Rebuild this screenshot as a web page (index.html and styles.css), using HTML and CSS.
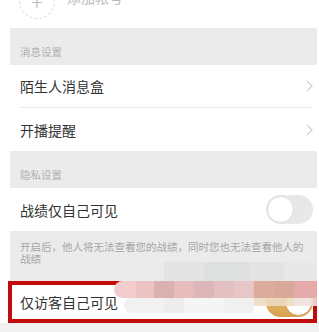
FILE: index.html
```html
<!DOCTYPE html>
<html lang="zh-CN">
<head>
    <meta charset="UTF-8">
    <meta name="viewport" content="width=device-width, initial-scale=1.0">
    <title>设置</title>
    <link rel="stylesheet" href="styles.css">
</head>
<body>
    <div class="page">
        <div class="account">
            <span class="add-circle">+</span>
            <span class="account-text">添加帐号</span>
        </div>

        <div class="section-title">消息设置</div>
        <div class="row row-line">
            <span class="row-label">陌生人消息盒</span>
            <svg class="chevron" width="7" height="12" viewBox="0 0 7 12">
                <path d="M1 1 L6 6 L1 11" fill="none" stroke="#d4d4d4" stroke-width="1.3"/>
            </svg>
        </div>
        <div class="row">
            <span class="row-label">开播提醒</span>
            <svg class="chevron" width="7" height="12" viewBox="0 0 7 12">
                <path d="M1 1 L6 6 L1 11" fill="none" stroke="#d4d4d4" stroke-width="1.3"/>
            </svg>
        </div>

        <div class="section-title">隐私设置</div>
        <div class="row">
            <span class="row-label">战绩仅自己可见</span>
            <span class="switch"><span class="knob"></span></span>
        </div>
        <div class="note">开启后，他人将无法查看您的战绩，同时您也无法查看他人的战绩</div>
        <div class="row row-marked">
            <span class="row-label">仅访客自己可见</span>
            <span class="switch switch-on"><span class="knob"></span></span>
            <div class="frame"></div>
            <div class="mosaic">
                <div class="mosaic-line">
                    <span class="cell" style="width:40px;background:#e4e4e4"></span>
                    <span class="cell" style="width:45px;background:#dedfdf"></span>
                    <span class="cell" style="width:35px;background:#e3e3e3"></span>
                    <span class="cell" style="width:33px;background:#e8e8e8"></span>
                </div>
                <div class="mosaic-line line-pink">
                    <span class="cell cell-edge" style="width:22px;background:#f3cdcd"></span>
                    <span class="cell" style="width:18px;background:#ebc3c3"></span>
                    <span class="cell" style="width:20px;background:#d9b1b1"></span>
                    <span class="cell" style="width:20px;background:#e6bcbc"></span>
                    <span class="cell" style="width:20px;background:#dcb6b8"></span>
                    <span class="cell" style="width:20px;background:#e4c0c0"></span>
                    <span class="cell" style="width:20px;background:#e6c6c6"></span>
                    <span class="cell" style="width:20px;background:#dcab9c"></span>
                    <span class="cell" style="width:20px;background:#d8a898"></span>
                    <span class="cell" style="width:23px;background:#e7aaaa"></span>
                </div>
                <div class="mosaic-line line-low">
                    <span class="cell cell-edge" style="width:40px;background:#f1f1f1"></span>
                    <span class="cell" style="width:20px;background:#ececec"></span>
                    <span class="cell" style="width:40px;background:#f4f4f4"></span>
                    <span class="cell" style="width:30px;background:#efefef"></span>
                    <span class="cell" style="width:40px;background:#eddcc2"></span>
                    <span class="cell" style="width:23px;background:#f0e0dc"></span>
                </div>
            </div>
        </div>
        <div class="bottom-gap"></div>
    </div>
</body>
</html>
```

FILE: styles.css
```css
body {
    margin: 0;
    padding: 0;
    background-color: #ffffff;
    font-family: "Noto Sans CJK SC", "Noto Sans", sans-serif;
    color: #333333;
    overflow: hidden;
}

.page {
    margin-left: 10px;
    width: 307px;
}

.account {
    height: 28px;
    display: flex;
    align-items: flex-start;
    overflow: hidden;
}

.add-circle {
    width: 36px;
    height: 36px;
    margin-top: -17px;
    margin-left: 9px;
    box-sizing: border-box;
    border: 1px dashed #dddddd;
    border-radius: 50%;
    display: flex;
    justify-content: center;
    align-items: center;
    color: #bbbbbb;
    font-size: 22px;
    font-weight: 300;
    line-height: 1;
}

.account-text {
    margin-left: 12px;
    margin-top: -13px;
    font-size: 14px;
    color: #bbbbbb;
    line-height: 20px;
}

.section-title {
    height: 37px;
    box-sizing: border-box;
    background-color: #ebebeb;
    padding: 0 10px 7px;
    display: flex;
    align-items: flex-end;
    font-size: 10.5px;
    line-height: 12px;
    color: #b0b0b0;
}

.row {
    height: 43px;
    box-sizing: border-box;
    margin: 0 4px 0 10px;
    display: flex;
    align-items: center;
    justify-content: space-between;
    position: relative;
}

.row-line {
    border-bottom: 1px solid #e8e8e8;
}

.row-label {
    font-size: 14px;
    color: #333333;
}

.chevron {
    display: block;
}

.switch {
    width: 47px;
    height: 29px;
    box-sizing: border-box;
    border-radius: 15px;
    background-color: #e8e8e8;
    display: flex;
    align-items: center;
    padding: 0 1px;
}

.switch .knob {
    width: 27px;
    height: 27px;
    box-sizing: border-box;
    border-radius: 50%;
    background-color: #ffffff;
    border: 1px solid #dcdcdc;
}

.switch-on {
    background: linear-gradient(#eac070, #d8a24e);
    justify-content: flex-end;
}

.switch-on .knob {
    border-color: #dba45a;
}

.note {
    height: 50px;
    box-sizing: border-box;
    background-color: #ebebeb;
    padding: 10px 12px 0 10px;
    font-size: 10.5px;
    line-height: 11.5px;
    color: #a6a6a6;
}

.row-marked {
    height: 42px;
}

.frame {
    position: absolute;
    left: -12px;
    top: 0;
    right: -4px;
    bottom: 0;
    border: 4px solid #c40b0b;
}

.mosaic {
    position: absolute;
    top: -19px;
    right: -4px;
    display: flex;
    flex-direction: column;
    align-items: flex-end;
}

.mosaic-line {
    display: flex;
    height: 19px;
}

.line-pink {
    height: 17px;
}

.line-low {
    height: 15px;
    opacity: 0.9;
}

.line-low .cell:nth-last-child(-n+2) {
    height: 8px;
}

.cell {
    display: block;
    height: 100%;
}

.cell-edge {
    border-radius: 10px 0 0 10px;
}

.bottom-gap {
    height: 9px;
    margin-left: -10px;
    width: 319px;
    background-color: #f0f0f0;
}
```
